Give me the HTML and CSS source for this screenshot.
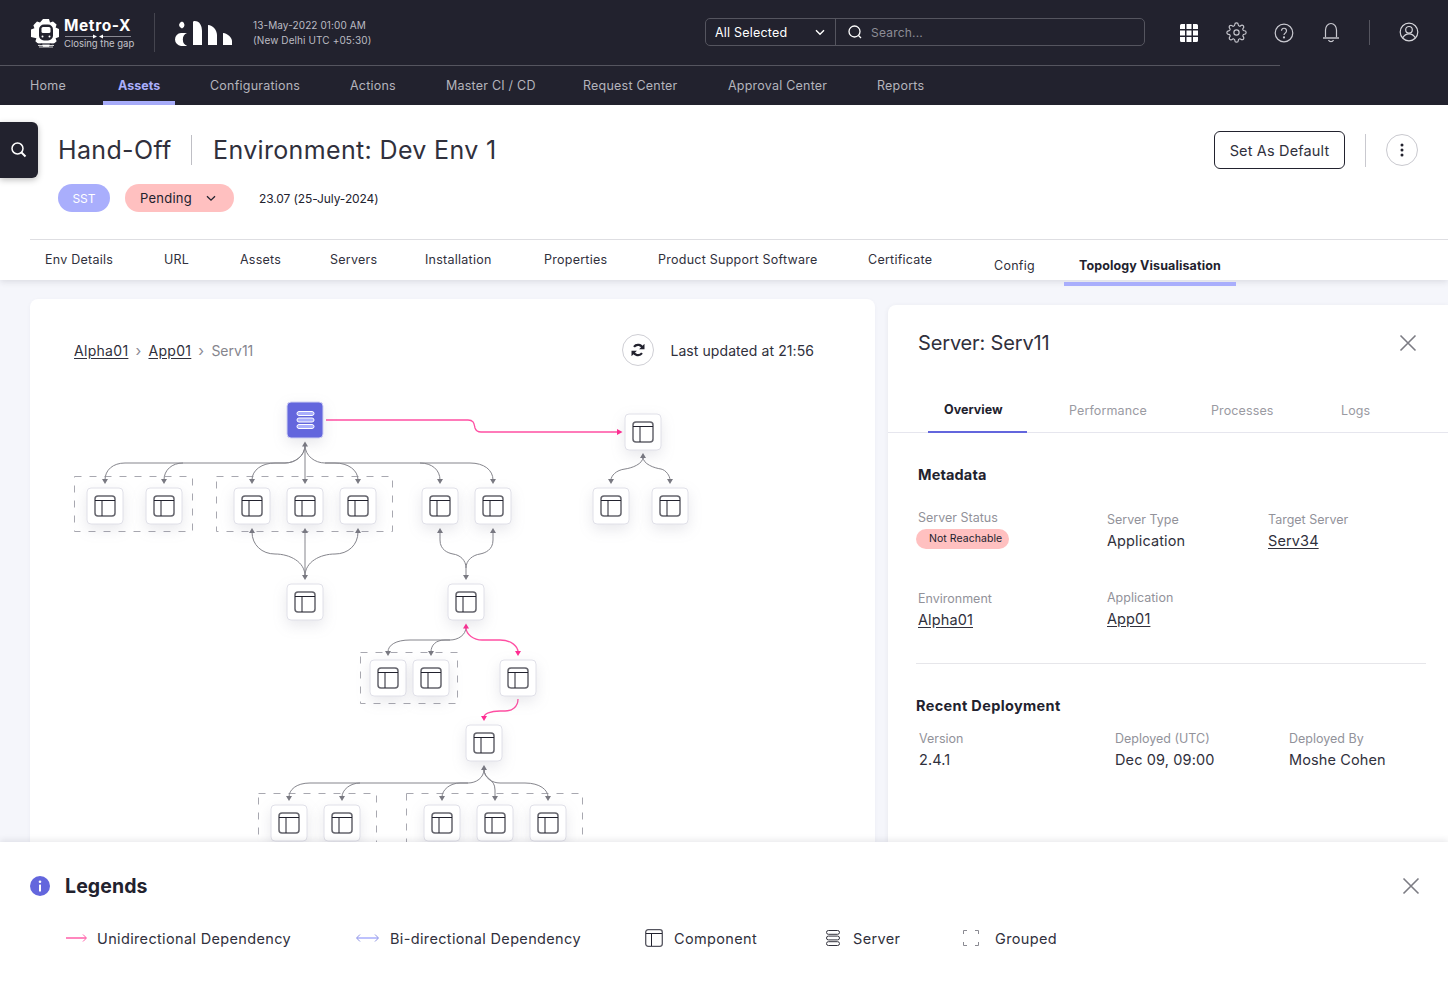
FILE: index.html
```html
<!DOCTYPE html>
<html lang="en">
<head>
<meta charset="utf-8">
<title>Topology Visualisation</title>
<link rel="stylesheet" href="styles.css">
</head>
<body>
<div class="page">
  <header class="topbar">
    <div class="toprow">
      <div class="brand">
        <svg class="brand-gear" width="32" height="30" viewBox="0 0 32 30">
          <path fill="#fff" d="M13 1h6l1 3.400 3-1 3.600 3.200-1 3 3.400 1.400V19l-3.400 1.200 1 3-3.600 3.400-3-1-1 3.200h-6l-1-3.200-3 1-3.600-3.400 1-3L1 19v-7.400l3.400-1.400-1-3L7 3.400l3 1z"/>
          <rect x="9" y="6.500" width="14" height="16" rx="5" fill="#22222e"/>
          <rect x="11.500" y="9" width="9" height="6" rx="1.500" fill="#fff"/>
          <circle cx="12.500" cy="18.500" r="1" fill="#fff"/><circle cx="19.500" cy="18.500" r="1" fill="#fff"/>
          <path stroke="#22222e" stroke-width="1.200" d="M7 26h18"/>
          <path stroke="#fff" stroke-width=".8" d="M8 27.500h16M9 29h14"/>
        </svg>
        <div class="brand-text">
          <span class="brand-name">Metro-X</span>
          <svg class="brand-line" width="68" height="5" viewBox="0 0 68 5"><path d="M1 2.500h31M36 2.500h31" stroke="#a5a5ad" stroke-width=".8"/><path d="M29 .5l4 2-4 2zM39 .5l-4 2 4 2z" fill="#fff"/></svg>
          <span class="brand-sub">Closing the gap</span>
        </div>
      </div>
      <span class="vsep"></span>
      <svg class="client-logo" width="58" height="26" viewBox="0 0 58 26">
        <path fill="#fff" d="M7 1.500a4 4 0 0 1 2.500 3.500A4 4 0 0 1 7 8.600 4.500 4.500 0 0 1 4 5a4.500 4.500 0 0 1 3-3.500zM12 13a7 7 0 0 0 0 12.800A10 10 0 0 1 6 25.900 6.500 6.500 0 0 1 0 19.500 6.500 6.500 0 0 1 6 13z"/>
        <path fill="#fff" d="M18 25V2.500c0-1 .5-1.500 1.500-1.500C25 1 27 6 27 11v14zM33 25V5c5 .5 9 5 9 10v10zM48 25V13c5 .5 9 5 9 8v4z"/>
      </svg>
      <div class="stamp">
        <span>13-May-2022 01:00 AM</span>
        <span>(New Delhi UTC +05:30)</span>
      </div>
      <div class="searchbar">
        <div class="scope">
          <span>All Selected</span>
          <svg width="10" height="7" viewBox="0 0 10 7"><path d="M1 1.200l4 4 4-4" fill="none" stroke="#fff" stroke-width="1.400"/></svg>
        </div>
        <div class="search-input">
          <svg width="16" height="16" viewBox="0 0 16 16"><circle cx="7.500" cy="7.500" r="5.500" fill="none" stroke="#fff" stroke-width="1.300"/><path d="M11.500 11.500l2.500 2.500" stroke="#fff" stroke-width="1.300"/></svg>
          <span>Search...</span>
        </div>
      </div>
      <div class="top-icons">
        <svg width="18" height="18" viewBox="0 0 18 18"><path fill="#fff" d="M1.500 0H5v5H0V1.500A1.500 1.500 0 0 1 1.500 0zM6.500 0h5v5h-5zM13 0h3.500A1.500 1.500 0 0 1 18 1.500V5h-5zM0 6.500h5v5H0zM6.500 6.500h5v5h-5zM13 6.500h5v5h-5zM0 13h5v5H1.500A1.500 1.500 0 0 1 0 16.500zM6.500 13h5v5h-5zM13 13h5v3.500a1.500 1.500 0 0 1-1.500 1.500H13z"/></svg>
        <svg width="21" height="21" viewBox="0 0 24 24" fill="none" stroke="#c9c9d0" stroke-width="1.300"><circle cx="12" cy="12" r="3"/><path d="M19.400 15a1.650 1.650 0 0 0 .33 1.820l.06.06a2 2 0 0 1 0 2.830 2 2 0 0 1-2.830 0l-.06-.06a1.650 1.650 0 0 0-1.820-.33 1.650 1.650 0 0 0-1 1.510V21a2 2 0 0 1-2 2 2 2 0 0 1-2-2v-.09A1.650 1.650 0 0 0 9 19.400a1.650 1.650 0 0 0-1.820.33l-.06.06a2 2 0 0 1-2.830 0 2 2 0 0 1 0-2.830l.06-.06a1.650 1.650 0 0 0 .33-1.820 1.650 1.650 0 0 0-1.510-1H3a2 2 0 0 1-2-2 2 2 0 0 1 2-2h.09A1.650 1.650 0 0 0 4.600 9a1.650 1.650 0 0 0-.33-1.820l-.06-.06a2 2 0 0 1 0-2.830 2 2 0 0 1 2.830 0l.06.06a1.650 1.650 0 0 0 1.820.33H9a1.650 1.650 0 0 0 1-1.510V3a2 2 0 0 1 2-2 2 2 0 0 1 2 2v.09a1.650 1.650 0 0 0 1 1.510 1.650 1.650 0 0 0 1.820-.33l.06-.06a2 2 0 0 1 2.830 0 2 2 0 0 1 0 2.830l-.06.06a1.650 1.650 0 0 0-.33 1.820V9a1.650 1.650 0 0 0 1.510 1H21a2 2 0 0 1 2 2 2 2 0 0 1-2 2h-.09a1.650 1.650 0 0 0-1.510 1z"/></svg>
        <svg width="20" height="20" viewBox="0 0 20 20" fill="none" stroke="#c9c9d0" stroke-width="1.200"><circle cx="10" cy="10" r="8.800"/><path d="M7.500 7.700a2.500 2.500 0 1 1 3.800 2.200c-.9.500-1.300 1-1.300 2.200"/><circle cx="10" cy="14.400" r=".5" fill="#c9c9d0"/></svg>
        <svg width="18" height="21" viewBox="0 0 18 21" fill="none" stroke="#c9c9d0" stroke-width="1.200"><path d="M3.500 15.500V8a5.500 6.500 0 0 1 11 0v7.500"/><path d="M1 16h16" stroke-width="1.800" stroke="#a5a5ad"/><path d="M6.500 18a2.700 2.500 0 0 0 5 0"/></svg>
      </div>
      <span class="vsep-small"></span>
      <svg class="user-icon" width="20" height="20" viewBox="0 0 20 20" fill="none" stroke="#d5d5da" stroke-width="1.200"><circle cx="10" cy="10" r="8.800"/><circle cx="10" cy="7.800" r="3.300"/><path d="M3.800 15.800c1.300-2.500 3.500-3.900 6.200-3.900s4.900 1.400 6.200 3.900"/></svg>
    </div>
    <nav class="mainnav">
      <a class="navlink">Home</a>
      <a class="navlink navlink-active">Assets</a>
      <a class="navlink">Configurations</a>
      <a class="navlink">Actions</a>
      <a class="navlink">Master CI / CD</a>
      <a class="navlink">Request Center</a>
      <a class="navlink">Approval Center</a>
      <a class="navlink">Reports</a>
    </nav>
  </header>

  <button class="side-search" aria-label="Search">
    <svg width="18" height="18" viewBox="0 0 18 18" fill="none" stroke="#fff"><circle cx="7.500" cy="7.500" r="5.500" stroke-width="1.500"/><path d="M11.500 11.500l4 4" stroke-width="2"/></svg>
  </button>

  <section class="titleblock">
    <div class="titlerow">
      <h1 class="title">Hand-Off</h1>
      <span class="title-sep"></span>
      <h2 class="title title-env">Environment: Dev Env 1</h2>
      <button class="default-btn">Set As Default</button>
      <span class="action-sep"></span>
      <button class="more-btn" aria-label="More">
        <svg width="4" height="14" viewBox="0 0 4 14" fill="#22222e"><circle cx="2" cy="2" r="1.500"/><circle cx="2" cy="7" r="1.500"/><circle cx="2" cy="12" r="1.500"/></svg>
      </button>
    </div>
    <div class="chiprow">
      <span class="chip chip-sst">SST</span>
      <span class="chip chip-pending">Pending
        <svg width="10" height="7" viewBox="0 0 10 7"><path d="M1 1.200l4 4 4-4" fill="none" stroke="#22222e" stroke-width="1.300"/></svg>
      </span>
      <span class="version">23.07 (25-July-2024)</span>
    </div>
    <div class="tabs">
      <a class="tab">Env Details</a>
      <a class="tab">URL</a>
      <a class="tab">Assets</a>
      <a class="tab">Servers</a>
      <a class="tab">Installation</a>
      <a class="tab">Properties</a>
      <a class="tab">Product Support Software</a>
      <a class="tab">Certificate</a>
      <a class="tab tab-low">Config</a>
      <a class="tab tab-low tab-active">Topology Visualisation</a>
    </div>
  </section>

  <main class="workspace">
    <section class="canvas-card">
      <div class="crumbrow">
        <a class="crumb">Alpha01</a><span class="crumb-sep">›</span>
        <a class="crumb">App01</a><span class="crumb-sep">›</span>
        <span class="crumb-current">Serv11</span>
        <button class="refresh" aria-label="Refresh">
          <svg width="14" height="14" viewBox="0 0 14 14" fill="none" stroke="#22222e" stroke-width="2.200"><path d="M11.800 5.500A5 5 0 0 0 3 3.800M2.200 8.500A5 5 0 0 0 11 10.200"/><path d="M13.500 .8v5.400H8.100zM.5 13.200V7.800h5.400z" fill="#22222e" stroke="none"/></svg>
        </button>
        <span class="updated">Last updated at 21:56</span>
      </div>
      <svg class="topology" width="845" height="470" viewBox="30 380 845 470">
        <defs>
          <g id="n">
            <rect class="node" x="0" y="0" width="36" height="36" rx="4"/>
            <rect x="8" y="8" width="20" height="20" rx="3" fill="none" stroke="#64646c" stroke-width="1.500"/>
            <path d="M8 12.500h20M15 12.500V28" fill="none" stroke="#22222e" stroke-width="1"/>
          </g>
          <path id="ad" d="M-3-5h6L0 0z" fill="#7a7a82"/>
          <path id="au" d="M-3 5h6L0 0z" fill="#7a7a82"/>
          <path id="pd" d="M-3-5h6L0 0z" fill="#ff2e93"/>
        </defs>
        <g class="groups">
          <rect x="74.500" y="476.500" width="118" height="55"/>
          <rect x="216.500" y="476.500" width="176" height="55"/>
          <rect x="360.500" y="652.500" width="97" height="51"/>
          <rect x="258.500" y="793.500" width="118" height="60"/>
          <rect x="406.500" y="793.500" width="176" height="60"/>
        </g>
        <g class="edges">
          <path d="M305 445C305 456 295 463 285 463H125C113 463 105 470 105 480"/>
          <path d="M183 463C172 463 164 470 164 480"/>
          <path d="M305 445C305 456 295 463 285 463H275C262 463 252 470 252 480"/>
          <path d="M305 445V480"/>
          <path d="M305 445C305 456 315 463 325 463H335C348 463 358 470 358 480"/>
          <path d="M325 463H420C432 463 440 470 440 480"/>
          <path d="M420 463H470C484 463 493 470 493 480"/>
          <path d="M252 532C252 545 262 554 275 554C290 554 305 562 305 576"/>
          <path d="M305 532V576"/>
          <path d="M358 532C358 545 348 554 335 554C320 554 305 562 305 576"/>
          <path d="M440 532V540C440 550 448 553 453 554C460 555 466 560 466 568V576"/>
          <path d="M493 532V540C493 550 485 553 480 554C473 555 466 560 466 568"/>
          <path d="M643 457C643 464 632 468 625 469C616 470 611 476 611 480"/>
          <path d="M643 457C643 464 654 468 661 469C666 470 670 476 670 480"/>
          <path d="M466 627C466 635 458 640 450 640H410C396 640 388 645 388 652"/>
          <path d="M450 640H445C436 640 431 645 431 652"/>
          <path d="M484 769C484 778 476 783 468 783H310C296 783 289 790 289 797"/>
          <path d="M360 783C350 783 342 790 342 797"/>
          <path d="M468 783H460C450 783 442 790 442 797"/>
          <path d="M484 769C484 780 495 778 495 790V797"/>
          <path d="M484 769C484 778 492 783 500 783H525C540 783 548 790 548 797"/>
        </g>
        <g class="links">
          <path d="M326 420H468C474 420 474 424 475 428C476 431 478 432 481 432H618"/>
          <path d="M466 627C466 635 474 640 482 640H500C512 640 518 647 518 652"/>
          <path d="M518 699C518 707 512 711 505 711H500C490 711 484 714 484 717"/>
        </g>
        <use href="#au" x="305" y="441.500"/><use href="#au" x="643" y="453"/><use href="#au" x="484" y="765"/>
        <use href="#au" x="252" y="528"/><use href="#au" x="305" y="528"/><use href="#au" x="358" y="528"/><use href="#au" x="440" y="528"/><use href="#au" x="493" y="528"/>
        <use href="#ad" x="105" y="484"/><use href="#ad" x="164" y="484"/><use href="#ad" x="252" y="484"/><use href="#ad" x="305" y="484"/><use href="#ad" x="358" y="484"/><use href="#ad" x="440" y="484"/><use href="#ad" x="493" y="484"/>
        <use href="#ad" x="611" y="484"/><use href="#ad" x="670" y="484"/><use href="#ad" x="305" y="580"/><use href="#ad" x="466" y="580"/>
        <use href="#ad" x="388" y="656"/><use href="#ad" x="431" y="656"/>
        <use href="#ad" x="289" y="801"/><use href="#ad" x="342" y="801"/><use href="#ad" x="442" y="801"/><use href="#ad" x="495" y="801"/><use href="#ad" x="548" y="801"/>
        <path d="M617 429l5.500 3-5.500 3z" fill="#ff2e93"/>
        <path d="M463 628.500h6L466 623.500z" fill="#ff2e93"/>
        <use href="#pd" x="518" y="656"/><use href="#pd" x="484" y="721"/>
        <rect class="node node-server" x="287" y="402" width="36" height="36" rx="4"/>
        <g class="server-glyph"><rect x="297" y="411.500" width="17" height="4" rx="2"/><rect x="297" y="418" width="17" height="4" rx="2"/><rect x="297" y="424.500" width="17" height="4" rx="2"/></g>
        <use href="#n" x="625" y="414"/>
        <use href="#n" x="87" y="488"/><use href="#n" x="146" y="488"/><use href="#n" x="234" y="488"/><use href="#n" x="287" y="488"/><use href="#n" x="340" y="488"/><use href="#n" x="422" y="488"/><use href="#n" x="475" y="488"/><use href="#n" x="593" y="488"/><use href="#n" x="652" y="488"/>
        <use href="#n" x="287" y="584"/><use href="#n" x="448" y="584"/>
        <use href="#n" x="370" y="660"/><use href="#n" x="413" y="660"/><use href="#n" x="500" y="660"/>
        <use href="#n" x="466" y="725"/>
        <use href="#n" x="271" y="805"/><use href="#n" x="324" y="805"/><use href="#n" x="424" y="805"/><use href="#n" x="477" y="805"/><use href="#n" x="530" y="805"/>
      </svg>
    </section>

    <aside class="detail-card">
      <div class="detail-head">
        <h3 class="detail-title">Server: Serv11</h3>
        <svg width="18" height="18" viewBox="0 0 18 18"><path d="M1.500 1.500l15 15M16.500 1.500l-15 15" stroke="#7c7c84" stroke-width="1.600" fill="none"/></svg>
      </div>
      <div class="detail-tabs">
        <a class="dtab dtab-active">Overview</a>
        <a class="dtab">Performance</a>
        <a class="dtab">Processes</a>
        <a class="dtab">Logs</a>
      </div>
      <div class="detail-body">
        <h4 class="section-title">Metadata</h4>
        <div class="meta-grid">
          <div class="field field-status"><span class="label">Server Status</span><span class="status-pill">Not Reachable</span></div>
          <div class="field field-low"><span class="label">Server Type</span><span class="value">Application</span></div>
          <div class="field field-low"><span class="label">Target Server</span><a class="value link">Serv34</a></div>
          <div class="field field-env"><span class="label">Environment</span><a class="value link">Alpha01</a></div>
          <div class="field field-app"><span class="label">Application</span><a class="value link">App01</a></div>
        </div>
        <hr class="rule">
        <h4 class="section-title section-deploy">Recent Deployment</h4>
        <div class="deploy-grid">
          <div class="field"><span class="label">Version</span><span class="value">2.4.1</span></div>
          <div class="field"><span class="label">Deployed (UTC)</span><span class="value">Dec 09, 09:00</span></div>
          <div class="field"><span class="label">Deployed By</span><span class="value">Moshe Cohen</span></div>
        </div>
      </div>
    </aside>
  </main>

  <footer class="legend">
    <div class="legend-head">
      <svg width="20" height="20" viewBox="0 0 20 20"><circle cx="10" cy="10" r="10" fill="#6366dd"/><rect x="9" y="8.500" width="2" height="7" rx=".5" fill="#fff"/><circle cx="10" cy="5.800" r="1.300" fill="#fff"/></svg>
      <h3 class="legend-title">Legends</h3>
      <svg class="legend-close" width="18" height="18" viewBox="0 0 18 18"><path d="M1.500 1.500l15 15M16.500 1.500l-15 15" stroke="#7c7c84" stroke-width="1.600" fill="none"/></svg>
    </div>
    <div class="legend-items">
      <div class="legend-item gap-uni">
        <svg width="21" height="10" viewBox="0 0 21 10"><path d="M0 5h20" stroke="#ff5fa8" stroke-width="1.500"/><path d="M17 1.500L20.500 5 17 8.500" fill="none" stroke="#ff5fa8"/></svg>
        <span>Unidirectional Dependency</span>
      </div>
      <div class="legend-item gap-bi">
        <svg width="23" height="10" viewBox="0 0 23 10"><path d="M1 5h21" stroke="#a9aefc" stroke-width="1.500"/><path d="M4 1.500L.5 5 4 8.500M19 1.500L22.500 5 19 8.500" fill="none" stroke="#8d92e0"/></svg>
        <span>Bi-directional Dependency</span>
      </div>
      <div class="legend-item gap-comp">
        <svg width="18" height="18" viewBox="0 0 18 18" fill="none"><rect x=".7" y=".7" width="16.600" height="16.600" rx="2.500" stroke="#55555f" stroke-width="1.300"/><path d="M1 4.500h16M6.500 4.500V17" stroke="#22222e"/></svg>
        <span>Component</span>
      </div>
      <div class="legend-item gap-serv">
        <svg width="14" height="16" viewBox="0 0 14 16" fill="none" stroke="#33333d"><rect x=".5" y=".5" width="13" height="3.800" rx="1.900"/><rect x=".5" y="6.100" width="13" height="3.800" rx="1.900"/><rect x=".5" y="11.700" width="13" height="3.800" rx="1.900"/></svg>
        <span>Server</span>
      </div>
      <div class="legend-item gap-group">
        <svg width="16" height="16" viewBox="0 0 16 16" fill="none" stroke="#8a8a92"><path d="M.5 4V.5H4M12 .5h3.500V4M.5 12v3.500H4M12 15.500h3.500V12"/></svg>
        <span>Grouped</span>
      </div>
    </div>
  </footer>
</div>
</body>
</html>
```

FILE: styles.css
```css
* { box-sizing: border-box; }
html, body { margin: 0; padding: 0; }
body {
  font-family: Inter, "Noto Sans", sans-serif;
  color: #22222e;
  background: #f5f6fb;
}
h1, h2, h3, h4 { margin: 0; font-weight: 400; }
button { font-family: inherit; background: none; padding: 0; cursor: pointer; }
a { color: inherit; }

.page {
  position: relative;
  width: 1448px;
  height: 989px;
  display: flex;
  flex-direction: column;
  overflow: hidden;
}

/* Header */
.topbar { height: 105px; background: #22222e; flex: none; }
.toprow {
  height: 66px;
  width: 1280px;
  padding-left: 30px;
  display: flex;
  align-items: center;
  border-bottom: 1px solid #55555f;
  overflow: visible;
}
.brand { display: flex; align-items: center; gap: 2px; width: 124px; margin-top: 2px; }
.brand-gear { flex: none; margin-top: -2px; }
.brand-text { display: flex; flex-direction: column; color: #fff; padding-top: 1px; }
.brand-name { font-size: 15.500px; font-weight: 700; line-height: 14px; letter-spacing: .6px; }
.brand-line { display: block; margin: 1px 0 0; }
.brand-sub { font-size: 9.500px; line-height: 10px; color: #c3c3ca; letter-spacing: 0; }
.vsep { width: 1px; height: 39px; background: #45454f; flex: none; }
.client-logo { margin-left: 20px; flex: none; }
.stamp {
  margin-left: 20px;
  width: 452px;
  display: flex;
  flex-direction: column;
  gap: 3px;
  font-size: 10px;
  line-height: 12px;
  letter-spacing: .1px;
  color: #bcbcc3;
}
.searchbar {
  width: 440px;
  height: 28px;
  margin-top: -1px;
  display: flex;
  border: 1px solid #55555f;
  border-radius: 5px;
  flex: none;
}
.scope {
  width: 130px;
  padding: 0 10px 0 9px;
  display: flex;
  align-items: center;
  justify-content: space-between;
  border-right: 1px solid #55555f;
  font-size: 12.500px;
  letter-spacing: .2px;
  color: #fff;
}
.search-input {
  display: flex;
  align-items: center;
  gap: 8px;
  padding-left: 11px;
  font-size: 12px;
  letter-spacing: .2px;
  color: #8d8d96;
}
.top-icons {
  position: absolute;
  left: 1180px;
  top: 22px;
  width: 160px;
  display: flex;
  align-items: center;
  justify-content: space-between;
}
.vsep-small { position: absolute; left: 1369px; top: 20px; width: 1px; height: 25px; background: #55555f; }
.user-icon { position: absolute; left: 1399px; top: 22px; }

.mainnav { display: grid; grid-template-columns: 88px 92px 140px 96px 137px 145px 149px auto; padding-left: 30px; height: 39px; }
.navlink {
  display: flex;
  align-items: center;
  font-size: 12.500px;
  letter-spacing: .22px;
  color: #b4b4bc;
  position: relative;
}
.navlink-active { color: #a9aefc; font-weight: 700; letter-spacing: 0; }
.navlink-active::after {
  content: "";
  position: absolute;
  left: -15px;
  top: 35px;
  width: 72px;
  height: 4px;
  background: #a9aefc;
}

.side-search {
  position: absolute;
  left: 0;
  top: 122px;
  width: 38px;
  height: 56px;
  border: 0;
  background: #22222e;
  border-radius: 0 6px 6px 0;
  box-shadow: 0 2px 6px rgba(0,0,0,.25);
  display: flex;
  align-items: center;
  justify-content: center;
  z-index: 3;
}

/* Title block */
.titleblock {
  position: relative;
  background: #fff;
  height: 175px;
  flex: none;
  padding-top: 26px;
  box-shadow: 0 2px 6px rgba(40,40,60,.12);
  z-index: 2;
}
.titlerow { display: flex; align-items: center; height: 38px; padding-left: 58px; }
.title { font-size: 25px; line-height: 38px; letter-spacing: .35px; color: #30303c; width: 133px; flex: none; white-space: nowrap; }
.title-sep { width: 1px; height: 30px; background: #bfbfc5; flex: none; }
.title-env { margin-left: 21px; width: 1001px; }
.default-btn {
  width: 131px;
  height: 38px;
  border: 1px solid #22222e;
  border-radius: 6px;
  color: #30303c;
  font-size: 14.500px;
  letter-spacing: .15px;
  flex: none;
}
.action-sep { margin-left: 20px; width: 1px; height: 33px; background: #c9c9cf; flex: none; }
.more-btn {
  margin-left: 20px;
  width: 32px;
  height: 32px;
  border: 1px solid #c9c9cf;
  border-radius: 50%;
  display: flex;
  align-items: center;
  justify-content: center;
  flex: none;
}
.chiprow { display: flex; align-items: center; margin-top: 15px; padding-left: 58px; height: 28px; }
.chip {
  height: 28px;
  border-radius: 14px;
  display: flex;
  align-items: center;
  font-size: 13px;
}
.chip-sst { width: 52px; justify-content: center; background: #a9aefc; color: #fff; font-size: 12px; }
.chip-pending {
  margin-left: 15px;
  width: 109px;
  padding: 0 18px 0 15px;
  justify-content: space-between;
  background: #ffc0c0;
  letter-spacing: .25px;
}
.version { margin-left: 25px; font-size: 12px; letter-spacing: -.1px; }
.tabs {
  position: absolute;
  left: 30px;
  right: 0;
  top: 134px;
  height: 41px;
  border-top: 1px solid #dedee2;
  padding-left: 15px;
  display: grid;
  grid-template-columns: 119px 76px 90px 95px 119px 114px 210px 126px 85px auto;
}
.tab { font-size: 12.500px; letter-spacing: .25px; line-height: 40px; color: #30303c; position: relative; white-space: nowrap; }
.tab-low { line-height: 52px; }
.tab-active { font-weight: 700; letter-spacing: .12px; color: #22222e; }
.tab-active::after {
  content: "";
  position: absolute;
  left: -15px;
  top: 42px;
  width: 172px;
  height: 4px;
  background: #a9aefc;
}

/* Workspace */
.workspace {
  flex: 1;
  min-height: 0;
  display: flex;
  gap: 13px;
  padding: 19px 0 0 30px;
  overflow: hidden;
}
.canvas-card {
  width: 845px;
  flex: none;
  background: #fff;
  border-radius: 8px 8px 0 0;
  overflow: hidden;
  box-shadow: 0 1px 4px rgba(60,60,90,.04);
}
.crumbrow {
  margin: 35px 0 14px;
  height: 32px;
  padding-left: 44px;
  display: flex;
  align-items: center;
  font-size: 14px;
  letter-spacing: .3px;
}
.crumb { text-decoration: underline; text-underline-offset: 2px; color: #30303c; }
.crumb-sep { margin: 0 7px; color: #8c8c94; font-size: 15px; }
.crumb-current { color: #85858d; width: 411px; letter-spacing: 0; }
.refresh {
  width: 32px;
  height: 32px;
  border: 1px solid #cfcfd5;
  border-radius: 50%;
  display: flex;
  align-items: center;
  justify-content: center;
  flex: none;
}
.updated { margin-left: 16px; font-size: 14px; color: #30303c; letter-spacing: .08px; }
.topology { display: block; }
.node { fill: #fff; stroke: #e0e0e8; stroke-width: 1; filter: drop-shadow(0 5px 7px rgba(90,90,120,.14)); }
.node-server { fill: #6366dd; stroke: #d0d1f3; }
.server-glyph rect { fill: #a9aefc; stroke: #fff; stroke-width: 1; }
.groups rect { fill: none; stroke: #a8a8b0; stroke-width: 1; stroke-dasharray: 7 8; }
.edges path { fill: none; stroke: #85858c; stroke-width: 1; }
.links path { fill: none; stroke: #ff4fa3; stroke-width: 1.300; }

.detail-card {
  flex: 1;
  margin-top: 6px;
  background: #fff;
  border-radius: 8px 0 0 0;
  overflow: hidden;
  box-shadow: 0 1px 5px rgba(60,60,90,.08);
}
.detail-head {
  height: 76px;
  padding: 26px 31px 0 30px;
  display: flex;
  align-items: flex-start;
  justify-content: space-between;
}
.detail-title { font-size: 20px; line-height: 24px; letter-spacing: -.15px; color: #30303c; }
.detail-head svg { margin-top: 3px; }
.detail-tabs {
  height: 52px;
  padding: 22px 0 0 56px;
  display: grid;
  grid-template-columns: 125px 142px 130px auto;
  align-items: start;
  border-bottom: 1px solid #e6e6ee;
}
.dtab { font-size: 12.500px; line-height: 16px; letter-spacing: .12px; color: #9a9aa2; position: relative; }
.dtab-active { font-weight: 700; letter-spacing: .02px; color: #22222e; margin-top: -1px; }
.dtab-active::after {
  content: "";
  position: absolute;
  left: -16px;
  top: 29px;
  width: 99px;
  height: 2px;
  background: #6366dd;
}
.detail-body { padding: 32px 22px 0 30px; }
.section-title { font-size: 14.500px; font-weight: 700; line-height: 20px; letter-spacing: .15px; color: #22222e; }
.meta-grid {
  margin-top: 25px;
  display: grid;
  grid-template-columns: 189px 161px auto;
  grid-template-rows: 72px 81px;
}
.field { display: flex; flex-direction: column; }
.label { font-size: 12.500px; line-height: 16px; letter-spacing: 0; color: #92929a; }
.value { font-size: 14.500px; line-height: 20px; letter-spacing: .12px; margin-top: 3px; color: #30303c; }
.link { text-decoration: underline; text-underline-offset: 2px; align-self: flex-start; }
.field-low { padding-top: 2px; }
.field-env { padding-top: 9px; }
.field-app { padding-top: 8px; }
.status-pill {
  margin: 3px 0 0 -2px;
  width: 93px;
  height: 20px;
  border-radius: 10px;
  background: #ffc0c0;
  font-size: 10.500px;
  line-height: 20px;
  letter-spacing: .05px;
  padding-left: 13px;
}
.rule { margin: 0 0 0 -2px; border: 0; border-top: 1px solid #e6e6ea; }
.section-deploy { margin: 32px 0 0 -2px; letter-spacing: .35px; }
.deploy-grid {
  margin: 15px 0 0 1px;
  display: grid;
  grid-template-columns: 196px 174px auto;
}

/* Legend */
.legend {
  height: 147px;
  flex: none;
  background: #fff;
  position: relative;
  z-index: 2;
  box-shadow: 0 -2px 6px rgba(40,40,60,.1);
  padding: 34px 28px 0 30px;
}
.legend-head { display: flex; align-items: center; height: 20px; }
.legend-title { margin-left: 15px; font-size: 19.500px; font-weight: 700; letter-spacing: .1px; color: #22222e; flex: 1; }
.legend-items {
  margin-top: 32px;
  padding-left: 36px;
  height: 20px;
  display: grid;
  grid-template-columns: 290px 289px 181px 137px auto;
  align-items: center;
}
.legend-item { display: flex; align-items: center; font-size: 14.500px; letter-spacing: .35px; color: #30303c; }
.gap-uni { gap: 10px; }
.gap-bi { gap: 11px; }
.gap-comp { gap: 11px; }
.gap-serv { gap: 13px; }
.gap-group { gap: 16px; }
```
